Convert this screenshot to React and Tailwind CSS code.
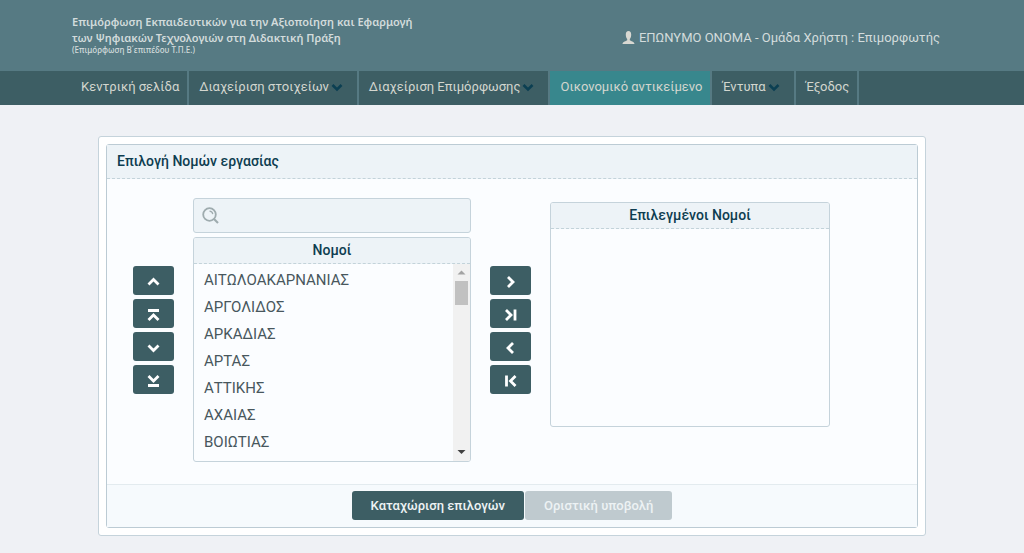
import { clsx } from "clsx";

const menu = [
  { label: "Κεντρική σελίδα" },
  { label: "Διαχείριση στοιχείων", sub: true },
  { label: "Διαχείριση Επιμόρφωσης", sub: true },
  { label: "Οικονομικό αντικείμενο", active: true },
  { label: "Έντυπα", sub: true },
  { label: "Έξοδος" },
];

const prefectures = [
  "ΑΙΤΩΛΟΑΚΑΡΝΑΝΙΑΣ",
  "ΑΡΓΟΛΙΔΟΣ",
  "ΑΡΚΑΔΙΑΣ",
  "ΑΡΤΑΣ",
  "ΑΤΤΙΚΗΣ",
  "ΑΧΑΙΑΣ",
  "ΒΟΙΩΤΙΑΣ",
];

const orderButtons = [
  { label: "Μετακίνηση πάνω", path: "M3.500 11.500l5-5l5 5" },
  { label: "Μετακίνηση στην κορυφή", path: "M3.500 14l5-5l5 5M3 4.500h11" },
  { label: "Μετακίνηση κάτω", path: "M3.500 6.500l5 5l5-5" },
  { label: "Μετακίνηση στο τέλος", path: "M3.500 4l5 5l5-5M3 13.500h11" },
];

const transferButtons = [
  { label: "Προσθήκη", path: "M6 4l5 5l-5 5" },
  { label: "Προσθήκη όλων", path: "M4 4l5 5l-5 5M13 3.500v11" },
  { label: "Αφαίρεση", path: "M11 4l-5 5l5 5" },
  { label: "Αφαίρεση όλων", path: "M13.500 4l-5 5l5 5M4.500 3.500v11" },
];

function IconButtons({ items }) {
  return (
    <div className="flex w-[41px] shrink-0 flex-col gap-1 self-center">
      {items.map((b) => (
        <button
          key={b.label}
          aria-label={b.label}
          className="flex h-[29px] items-center justify-center rounded-[3px] bg-[#3d5e64] pt-0.5 text-white"
        >
          <svg width="17" height="17" viewBox="0 0 17 17" fill="none" stroke="currentColor" strokeWidth="2.8">
            <path d={b.path} />
          </svg>
        </button>
      ))}
    </div>
  );
}

function ListCaption({ children }) {
  return (
    <h2 className="h-[26px] shrink-0 border-b border-dashed border-[#c3d3da] bg-[#edf3f7] text-center text-sm leading-6 font-medium text-[#0e3d50]">
      {children}
    </h2>
  );
}

function ScrollBar() {
  return (
    <div aria-hidden="true" className="flex w-[17px] shrink-0 flex-col items-center bg-[#f1f1f1]">
      <svg width="17" height="17" viewBox="0 0 17 17" fill="#a3a3a3">
        <path d="M4.500 10.500h8l-4-4z" />
      </svg>
      <div className="h-6 w-[13px] bg-[#c1c1c1]" />
      <svg className="mt-auto" width="17" height="17" viewBox="0 0 17 17" fill="#404040">
        <path d="M4.500 6h8l-4 4z" />
      </svg>
    </div>
  );
}

export default function App() {
  return (
    <div className="min-h-screen bg-[#eff1f5] font-['Roboto','Liberation_Sans',sans-serif]">
      {/* Header */}
      <header className="flex h-[71px] items-start justify-between bg-[#567a83] pr-[84px] pl-[72px] text-[#d3dcdc]">
        <div className="pt-3.5 font-['Noto_Sans','Open_Sans',sans-serif] text-[11px] leading-4 font-semibold">
          <p>Επιμόρφωση Εκπαιδευτικών για την Αξιοποίηση και Εφαρμογή</p>
          <p>των Ψηφιακών Τεχνολογιών στη Διδακτική Πράξη</p>
          <p className="text-[8px] leading-2 font-medium">(Επιμόρφωση Β΄επιπέδου Τ.Π.Ε.)</p>
        </div>
        <div className="flex items-center gap-1 pt-7 text-[13px] leading-5">
          <svg width="13" height="14" viewBox="0 0 13 14" fill="#d8d8d2">
            <path d="M6.500 0C4.700 0 3.800 1.500 3.800 3.500c0 2 .6 3.600 1.400 4.400v1.300C4.500 10 .5 10.500 .5 13h12c0-2.500-4-3-4.700-3.800V7.900c.8-.8 1.400-2.400 1.400-4.400C9.200 1.500 8.300 0 6.500 0z" />
          </svg>
          <span>ΕΠΩΝΥΜΟ ΟΝΟΜΑ - Ομάδα Χρήστη : Επιμορφωτής</span>
        </div>
      </header>

      {/* Menu */}
      <nav className="flex h-[34px] bg-[#3d5e64] pl-[71px] text-[13px] leading-8 text-[#d3d6cf]">
        {menu.map((m) => (
          <a
            key={m.label}
            href="#"
            className={clsx(
              "flex items-start border-r-2 border-[#567a83] pl-2.5 whitespace-nowrap",
              m.sub ? "pr-3.5" : "pr-2",
              m.active && "bg-[#38878d]"
            )}
          >
            {m.label}
            {m.sub && (
              <svg className="mt-3 ml-0.5" width="12" height="9" viewBox="0 0 12 9" fill="none" stroke="#0b3f52" strokeWidth="2.6">
                <path d="M1.500 2L6 6.500L10.500 2" />
              </svg>
            )}
          </a>
        ))}
      </nav>

      {/* Content */}
      <main className="mx-auto mt-[31px] max-w-[828px] rounded-[3px] border border-[#c5d3db] bg-white p-[7px]">
        <section className="rounded-[3px] border border-[#bccbd4] bg-[#fbfdff]">
          <h1 className="h-[34px] border-b border-dashed border-[#c3d3da] bg-[#edf3f7] pl-2.5 text-sm leading-8 font-medium text-[#0e3d50]">
            Επιλογή Νομών εργασίας
          </h1>

          <div className="flex gap-[19px] pt-[19px] pr-[87px] pb-[22px] pl-[26px]">
            <IconButtons items={orderButtons} />

            <div className="flex flex-1 flex-col gap-1">
              <label className="flex h-[35px] items-center gap-2 rounded-[3px] border border-[#c5d3db] bg-[#edf3f7] px-2">
                <svg width="17" height="17" viewBox="0 0 17 17" fill="none" stroke="#9eabae" strokeWidth="1.8">
                  <circle cx="7.500" cy="7.500" r="6.300" />
                  <path d="M12 12l4 4" strokeWidth="2.200" />
                  <path d="M7.500 4.200a3.500 3.500 0 0 1 3.300 3" strokeWidth="1.200" />
                </svg>
                <input type="text" aria-label="Αναζήτηση νομού" className="min-w-0 flex-1 bg-transparent text-sm outline-none" />
              </label>
              <div className="flex h-[225px] flex-col overflow-hidden rounded-[3px] border border-[#c5d3db]">
                <ListCaption>Νομοί</ListCaption>
                <div className="flex min-h-0 flex-1">
                  <ul className="flex-1 overflow-hidden pt-[3px] pl-2.5 text-[15px] leading-[27px] text-[#48575d]">
                    {prefectures.map((p) => (
                      <li key={p}>{p}</li>
                    ))}
                  </ul>
                  <ScrollBar />
                </div>
              </div>
            </div>

            <IconButtons items={transferButtons} />

            <div className="mt-1 h-[225px] flex-1 overflow-hidden rounded-[3px] border border-[#c5d3db]">
              <ListCaption>Επιλεγμένοι Νομοί</ListCaption>
            </div>
          </div>

          <div className="flex h-[43px] justify-center gap-px border-t border-[#e3ebef] bg-[#f6fafd] pt-1.5 text-[13px] font-medium">
            <button className="h-[29px] rounded-[3px] bg-[#3d5e64] px-[19px] text-[#eef3f4]">Καταχώριση επιλογών</button>
            <button disabled className="h-[29px] rounded-[3px] bg-[#bfcacf] px-[19px] text-[#edf2f4]">
              Οριστική υποβολή
            </button>
          </div>
        </section>
      </main>
    </div>
  );
}
